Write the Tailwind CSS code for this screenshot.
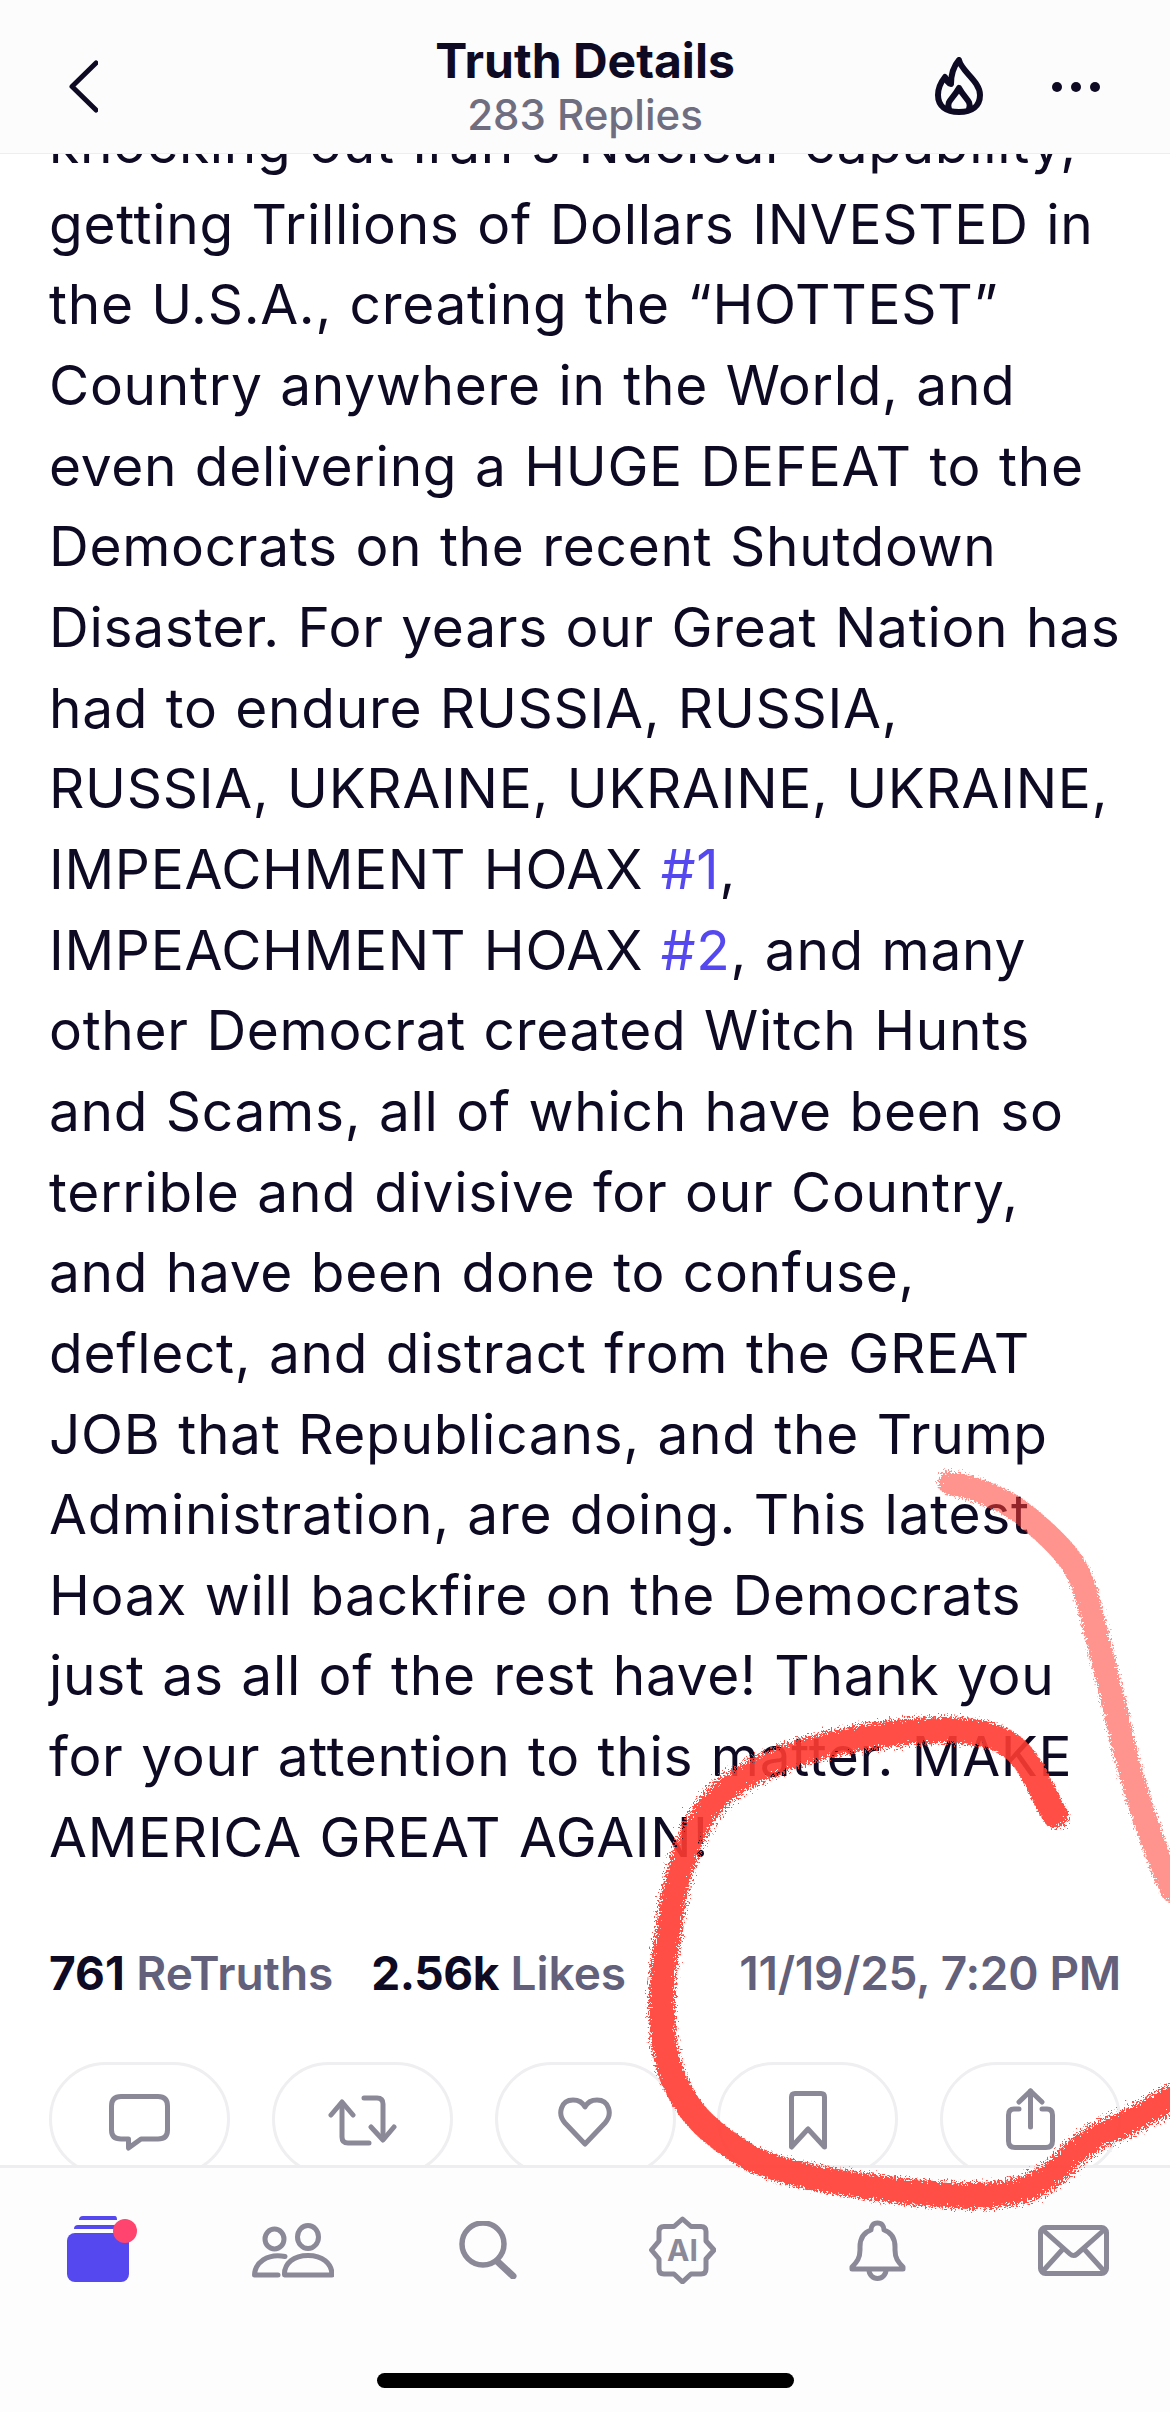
<!DOCTYPE html>
<html lang="en">
<head>
    <meta charset="UTF-8">
    <meta name="viewport" content="width=device-width, initial-scale=1.0">
    <title>Truth Details</title>
    <script src="https://cdn.jsdelivr.net/npm/@tailwindcss/browser@4"></script>
</head>
<body class="bg-white">
<div class="relative flex flex-col w-[1170px] h-[2412px] overflow-hidden font-[Inter,sans-serif] text-[#0e0a24]">

    <!-- Header -->
    <header class="relative z-10 flex items-start justify-between h-[154px] shrink-0 pl-[69px] pr-[70px] bg-[#fcfcfd] border-b border-[#eeeef1]">
        <svg class="mt-[60px]" width="29" height="53" viewBox="0 0 29 53" fill="none" stroke="#0e0a24" stroke-width="5" stroke-linecap="round" stroke-linejoin="round"><path d="M27 3 L3 26.5 L27 50"/></svg>
        <div class="absolute left-0 right-0 top-[34px] flex flex-col items-center">
            <h1 class="text-[48px] leading-[54px] font-bold">Truth Details</h1>
            <p class="text-[42px] leading-[54px] font-medium text-[#6f6d80]">283 Replies</p>
        </div>
        <div class="flex items-start gap-[69px]">
            <svg class="mt-[57px]" width="48" height="58" viewBox="0 0 48 58" fill="none" stroke="#0e0a24" stroke-width="6" stroke-linejoin="round" stroke-linecap="round"><path d="M24 3 C26 14 45 24 45 38 C45 49 37 55 24 55 C11 55 3 49 3 38 C3 31 6 25 10 20 C12 24 13 26 16 27 C16 18 18 10 24 3Z"/><path d="M14 52 C11 44 18 42 24 31 C30 42 37 44 34 52"/></svg>
            <div class="flex gap-[9px] mt-[82px]">
                <span class="w-[10px] h-[10px] rounded-full bg-[#0e0a24]"></span>
                <span class="w-[10px] h-[10px] rounded-full bg-[#0e0a24]"></span>
                <span class="w-[10px] h-[10px] rounded-full bg-[#0e0a24]"></span>
            </div>
        </div>
    </header>

    <!-- Post -->
    <main class="flex-1 min-h-0 overflow-hidden px-[49px]">
        <p class="-mt-[51px] text-[55px] leading-[80.65px] tracking-[0.7px] [word-spacing:1.5px] whitespace-nowrap">knocking out Iran's Nuclear capability,<br>getting Trillions of Dollars INVESTED in<br>the U.S.A., creating the “HOTTEST”<br>Country anywhere in the World, and<br>even delivering a HUGE DEFEAT to the<br>Democrats on the recent Shutdown<br>Disaster. For years our Great Nation has<br>had to endure RUSSIA, RUSSIA,<br>RUSSIA, UKRAINE, UKRAINE, UKRAINE,<br>IMPEACHMENT HOAX <span class="text-[#5448ee]">#1</span>,<br>IMPEACHMENT HOAX <span class="text-[#5448ee]">#2</span>, and many<br>other Democrat created Witch Hunts<br>and Scams, all of which have been so<br>terrible and divisive for our Country,<br>and have been done to confuse,<br>deflect, and distract from the GREAT<br>JOB that Republicans, and the Trump<br>Administration, are doing. This latest<br>Hoax will backfire on the Democrats<br>just as all of the rest have! Thank you<br>for your attention to this matter. MAKE<br>AMERICA GREAT AGAIN!</p>

        <div class="flex items-baseline justify-between mt-[68px] text-[46px] leading-[56px] font-semibold text-[#62607a]">
            <div class="flex gap-[38px]">
                <span><b class="font-bold text-[#0e0a24]">761</b> ReTruths</span>
                <span><b class="font-bold tracking-[-0.5px] text-[#0e0a24]">2.56k</b> Likes</span>
            </div>
            <span class="tracking-[-0.3px]">11/19/25, 7:20 PM</span>
        </div>

        <div class="flex justify-between mt-[61px]">
            <button class="flex items-center justify-center w-[181px] h-[114px] rounded-[57px] border-[3px] border-[#efeff1]">
                <svg class="mt-[6px]" width="61" height="57" viewBox="0 0 61 57" fill="none" stroke="#8b8997" stroke-width="5" stroke-linejoin="round"><path d="M12 2.5 H49 Q58.5 2.5 58.5 12 V36 Q58.5 45 49 45 H32 L19.5 54 V45 H12 Q2.5 45 2.5 36 V12 Q2.5 2.5 12 2.5Z"/></svg>
            </button>
            <button class="flex items-center justify-center w-[181px] h-[114px] rounded-[57px] border-[3px] border-[#efeff1]">
                <svg class="mt-[2px]" width="69" height="51" viewBox="0 0 69 51" fill="none" stroke="#8b8997" stroke-width="5" stroke-linecap="round" stroke-linejoin="round"><path d="M3 20 L14 7 L25 20"/><path d="M14 8 V42 Q14 48 20 48 H41"/><path d="M36 3 H49 Q55 3 55 9 V43"/><path d="M43 32 L55 45 L66 32"/></svg>
            </button>
            <button class="flex items-center justify-center w-[181px] h-[114px] rounded-[57px] border-[3px] border-[#efeff1]">
                <svg class="mt-[6px]" width="54" height="50" viewBox="0 0 54 50" fill="none" stroke="#8b8997" stroke-width="5" stroke-linejoin="round"><path d="M27 47 L7 26 C-1 17 3 3 15 3 C21 3 25 6 27 10 C29 6 33 3 39 3 C51 3 55 17 47 26 Z"/></svg>
            </button>
            <button class="flex items-center justify-center w-[181px] h-[114px] rounded-[57px] border-[3px] border-[#efeff1]">
                <svg class="mt-[2px]" width="38" height="59" viewBox="0 0 38 59" fill="none" stroke="#8b8997" stroke-width="5" stroke-linejoin="round"><path d="M6 2.5 H32 Q35.5 2.5 35.5 6 V56 L19 38 L2.5 56 V6 Q2.5 2.5 6 2.5Z"/></svg>
            </button>
            <button class="flex items-center justify-center w-[181px] h-[114px] rounded-[57px] border-[3px] border-[#efeff1]">
                <svg width="49" height="62" viewBox="0 0 49 62" fill="none" stroke="#8b8997" stroke-width="5" stroke-linecap="round" stroke-linejoin="round"><path d="M13 21 H8 Q2.5 21 2.5 27 V53 Q2.5 59.5 9 59.5 H40 Q46.5 59.5 46.5 53 V27 Q46.5 21 41 21 H36"/><path d="M24.5 3 V39"/><path d="M13 14 L24.5 3 L36 14"/></svg>
            </button>
        </div>
    </main>

    <!-- Tab bar -->
    <nav class="relative z-10 h-[247px] shrink-0 bg-[#fdfdfe] border-t-[3px] border-[#eeeef1]">
        <div class="grid grid-cols-6 h-[90px] mt-[37px] items-center justify-items-center">
            <svg class="ml-[10px]" width="72" height="70" viewBox="0 0 72 70" fill="#5448ee"><rect x="0" y="18" width="62" height="49" rx="8"/><path d="M7 14 Q7 10 11 10 H52 V14 Z"/><path d="M12 5 Q12 1 16 1 H48 Q50 1 50 5 Z"/><ellipse cx="58" cy="16" rx="12" ry="12" fill="#ff4470"/></svg>
            <svg width="82" height="55" viewBox="0 0 82 55" fill="none" stroke="#8b8997" stroke-width="5" stroke-linejoin="round" stroke-linecap="round"><ellipse cx="56" cy="14" rx="10.5" ry="11.5"/><ellipse cx="22.5" cy="16" rx="9.5" ry="10"/><path d="M32.5 52 C32 40 42 32.5 56 32.5 C70 32.5 80 40 80 52 Z"/><path d="M33 33.5 C15 30 3 40 2.5 52 H26"/></svg>
            <svg width="58" height="58" viewBox="0 0 58 58" fill="none" stroke="#8b8997" stroke-linecap="round"><circle cx="24" cy="23" r="21" stroke-width="5.5"/><path d="M39 41 L54 55" stroke-width="7"/></svg>
            <svg width="67" height="68" viewBox="0 0 67 68" fill="none" stroke="#8b8997" stroke-width="5" stroke-linejoin="round"><path d="M33.5 3 L42 10.5 H52 Q57 10.5 57 15.5 V25 L65 34 L57 43 V53 Q57 58 52 58 H42 L33.5 66 L25 58 H15 Q10 58 10 53 V43 L2.5 34 L10 25 V15.5 Q10 10.5 15 10.5 H25 Z"/><text x="33.5" y="45" text-anchor="middle" fill="#8b8997" stroke="none" font-family="Inter" font-weight="700" font-size="30">AI</text></svg>
            <svg width="57" height="61" viewBox="0 0 57 61" fill="none" stroke="#8b8997" stroke-width="5" stroke-linejoin="round"><path d="M28.5 3 C24 3 22 6 22 10 C13 13 11 20 11 27 V30 C11 38 8 42 3 47 V49 H54 V47 C49 42 46 38 46 30 V27 C46 20 44 13 35 10 C35 6 33 3 28.5 3Z"/><path d="M20 50 a8.5 8.5 0 0 0 17 0"/></svg>
            <svg class="ml-[2px]" width="71" height="51" viewBox="0 0 71 51" fill="none" stroke="#8b8997" stroke-width="5" stroke-linejoin="round" stroke-linecap="round"><rect x="2.5" y="2.5" width="66" height="46" rx="5"/><path d="M5 5 L32 29 Q35.5 32 39 29 L66 5"/><path d="M5 46 L24 25"/><path d="M66 46 L47 25"/></svg>
        </div>
        <!-- Home indicator -->
        <div class="absolute left-[377px] top-[205px] w-[417px] h-[15px] rounded-full bg-black"></div>
    </nav>

    <!-- Red marker scribble drawn over the screenshot -->
    <svg class="absolute inset-0 z-20 pointer-events-none" width="1170" height="2412" viewBox="0 0 1170 2412" fill="none" stroke="#ff3b30" stroke-linecap="round" stroke-linejoin="round">
        <filter id="rough" x="-5%" y="-5%" width="110%" height="110%">
            <feTurbulence type="fractalNoise" baseFrequency="0.55" numOctaves="3" seed="4"/>
            <feDisplacementMap in="SourceGraphic" scale="16"/>
        </filter>
        <g filter="url(#rough)">
            <path opacity="0.55" stroke-width="24" d="M950 1483 C985 1490 1015 1505 1033 1522 C1060 1545 1078 1565 1085 1590 C1095 1625 1100 1650 1108 1680 C1118 1715 1122 1750 1136 1790 C1145 1825 1160 1860 1172 1890"/>
            <path opacity="0.9" stroke-width="26" d="M1055 1815 C1040 1790 1030 1755 1005 1742 C980 1727 930 1728 880 1735 C830 1742 780 1755 745 1777 C720 1790 705 1810 695 1830 C680 1860 672 1900 669 1930 C663 1960 660 2000 663 2033 C666 2060 670 2075 680 2092 C692 2115 710 2135 754 2160 C785 2172 810 2178 838 2182 C870 2187 905 2192 934 2194 C965 2197 990 2197 1015 2192 C1035 2187 1050 2178 1065 2162 C1080 2148 1095 2135 1115 2128 C1135 2120 1155 2108 1175 2097"/>
        </g>
    </svg>
</div>
</body>
</html>
